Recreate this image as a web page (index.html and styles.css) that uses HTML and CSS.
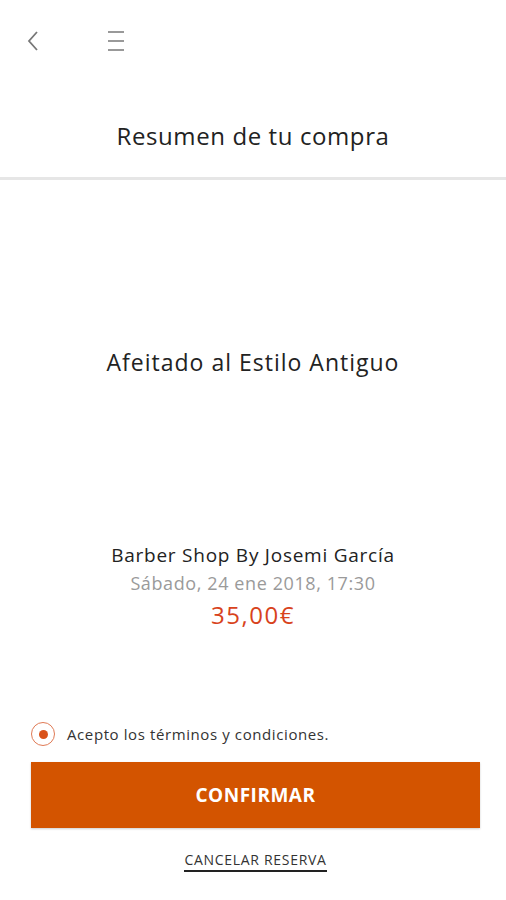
FILE: index.html
```html
<!doctype html>
<html lang="es">
<head>
  <meta charset="UTF-8">
  <meta name="viewport" content="width=device-width, initial-scale=1.0">
  <title>Resumen de tu compra</title>
  <link rel="stylesheet" href="styles.css">
</head>
<body>
  <div class="topbar">
    <span class="icon back">
      <svg width="14" height="22" viewBox="0 0 14 22"><path d="M11 2 L3 11 L11 20" fill="none" stroke="#777" stroke-width="1.8"/></svg>
    </span>
    <span class="icon menu">
      <svg width="20" height="22" viewBox="0 0 20 22"><path d="M2 2 H18 M2 11 H18 M2 20 H18" fill="none" stroke="#999" stroke-width="1.8"/></svg>
    </span>
  </div>

  <div class="header">Resumen de tu compra</div>

  <div class="content">
    <div class="service">Afeitado al Estilo Antiguo</div>

    <div class="details">
      <div class="shop">Barber Shop By Josemi García</div>
      <div class="date">Sábado, 24 ene 2018, 17:30</div>
      <div class="price">35,00€</div>
    </div>
  </div>

  <div class="footer">
    <label class="terms">
      <span class="radio"><span class="dot"></span></span>
      Acepto los términos y condiciones.
    </label>
    <div class="btn">CONFIRMAR</div>
    <div class="cancel"><span>CANCELAR RESERVA</span></div>
  </div>
</body>
</html>
```

FILE: styles.css
```css
html, body{
  margin:0;
  padding:0;
}
body {
  width: 506px;
  height: 900px;
  background: #fff;
  font-family: "Open Sans", "Lato", sans-serif;
  color: #222;
  display: flex;
  flex-direction: column;
}
.topbar {
  height: 82px;
  display: flex;
  align-items: center;
  padding-left: 26px;
}
.icon {
  display: block;
  line-height: 0;
}
.menu {
  margin-left: 66px;
}
.header {
  height: 98px;
  text-align: center;
  font-size: 24px;
  line-height: 30px;
  letter-spacing: 0.6px;
  border-bottom: 3px solid #e6e6e6;
  box-sizing: border-box;
  padding-top: 39px;
}
.content {
  flex: 1;
  text-align: center;
}
.service {
  margin-top: 167px;
  font-size: 23px;
  line-height: 30px;
  letter-spacing: 1px;
}
.details {
  margin-top: 164px;
}
.shop {
  font-size: 19px;
  line-height: 28px;
  letter-spacing: 0.75px;
}
.date {
  font-size: 18px;
  line-height: 28px;
  letter-spacing: 0.6px;
  color: #9a9a9a;
}
.price {
  font-size: 24px;
  line-height: 36px;
  letter-spacing: 1.5px;
  color: #d8431c;
}
.footer {
  padding: 0 26px 28px 31px;
}
.terms {
  display: flex;
  align-items: center;
  font-size: 15px;
  letter-spacing: 0.6px;
  color: #333;
  margin-bottom: 16px;
}
.radio {
  width: 22px;
  height: 22px;
  border: 1.5px solid #e07a55;
  border-radius: 50%;
  display: flex;
  align-items: center;
  justify-content: center;
  margin-right: 12px;
}
.dot {
  width: 9px;
  height: 9px;
  border-radius: 50%;
  background: #d9521a;
}
.btn {
  height: 66px;
  background: #d35400;
  color: #fff;
  font-weight: bold;
  font-size: 19px;
  letter-spacing: 0.5px;
  display: flex;
  align-items: center;
  justify-content: center;
  box-shadow: 0 1px 2px rgba(0,0,0,0.2);
}
.cancel {
  text-align: center;
  margin-top: 23px;
  font-size: 14px;
  line-height: 18px;
  letter-spacing: 0.7px;
  color: #333;
}
.cancel span {
  display: inline-block;
  border-bottom: 2px solid #222;
  padding-bottom: 1px;
}
```
